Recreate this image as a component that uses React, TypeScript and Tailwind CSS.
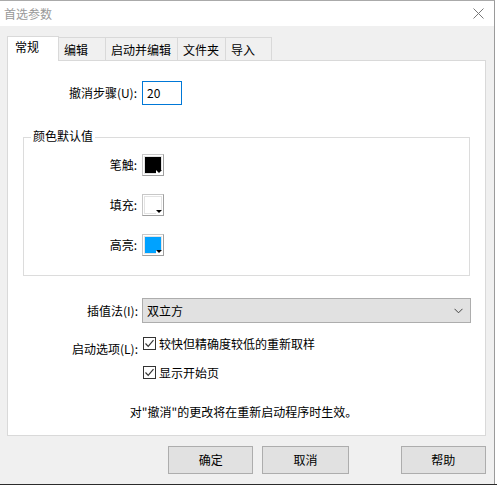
import React from 'react'

const font = { fontFamily: '"Noto Sans CJK SC", "Microsoft YaHei", sans-serif' }

function Swatch({ color }: { color: string }) {
  return (
    <div className="relative w-[22px] h-[22px] border border-[#a0a0a0] border-t-[#c8c8c8] border-l-[#c8c8c8] bg-white p-[1px]">
      <div className="w-full h-full border border-[#e3e3e3]" style={{ background: color }} />
      {/* little dropdown arrow */}
      <div className="absolute right-[1px] bottom-[1px] w-[6px] h-[4px] bg-white flex justify-center items-start">
        <div className="w-0 h-0 border-l-[3px] border-r-[3px] border-t-[3px] border-l-transparent border-r-transparent border-t-black" />
      </div>
    </div>
  )
}

function Check({ label }: { label: string }) {
  return (
    <div className="flex items-center">
      <div className="w-[13px] h-[13px] border border-[#333] bg-white flex items-center justify-center">
        <svg width="11" height="11" viewBox="0 0 11 11">
          <path d="M1.5 5.5 L4.2 8.3 L9.5 2.2" fill="none" stroke="#333" strokeWidth="1.2" />
        </svg>
      </div>
      <span className="ml-[3px] text-[12px] text-black leading-none">{label}</span>
    </div>
  )
}

export default function App() {
  const tabs = [
    { label: '编辑', w: 'w-[47px]' },
    { label: '启动并编辑', w: 'w-[72px]' },
    { label: '文件夹', w: 'w-[48px]' },
    { label: '导入', w: 'w-[46px]' },
  ]

  return (
    <div className="w-[497px] h-[485px] bg-white flex flex-col overflow-hidden" style={font}>
      <div className="flex flex-1">
        {/* Window */}
        <div className="w-[495px] h-[484px] flex flex-col bg-[#f0f0f0] border-t border-[#aaaaaa] border-r border-r-[#9a9a9a]">
          {/* Title bar */}
          <div className="h-[25px] bg-white flex items-center justify-between pl-[4px] pr-[10px]">
            <span className="text-[12px] text-[#999999] leading-none">首选参数</span>
            <svg width="11" height="11" viewBox="0 0 11 11">
              <path d="M0.5 0.5 L10.5 10.5 M10.5 0.5 L0.5 10.5" stroke="#777" strokeWidth="1" />
            </svg>
          </div>

          <div className="flex flex-col pl-[7px] pr-[8px] pt-[9px]">
            {/* Tabs */}
            <div className="flex items-end h-[25px]">
              <div className="w-[52px] h-[25px] bg-white border border-b-0 border-[#d9d9d9] pl-[7px] pt-[4px] text-[12px] text-black leading-none relative z-10 -mb-px">
                常规
              </div>
              {tabs.map((t) => (
                <div
                  key={t.label}
                  className={`${t.w} h-[23px] border border-l-0 border-b-0 border-[#d9d9d9] bg-[#f0f0f0] pl-[5px] pt-[6px] text-[12px] text-black leading-none`}
                >
                  {t.label}
                </div>
              ))}
            </div>

            {/* Panel */}
            <div className="h-[376px] bg-white border border-[#d9d9d9] flex flex-col">
              {/* Undo steps */}
              <div className="flex items-center mt-[20px]">
                <span className="w-[129px] text-right text-[12px] text-black">撤消步骤(U):</span>
                <div className="ml-[5px] w-[40px] h-[24px] border border-[#0078d7] flex items-center pl-[4px] text-[12px] text-black">
                  20
                </div>
              </div>

              {/* Colour group */}
              <div className="relative ml-[15px] mt-[32px] w-[447px] h-[139px] border border-[#dcdcdc] flex flex-col">
                <span className="absolute -top-[8px] left-[7px] bg-white px-[2px] text-[12px] text-black leading-none">
                  颜色默认值
                </span>
                {[
                  { label: '笔触:', color: '#000000' },
                  { label: '填充:', color: '#ffffff' },
                  { label: '高亮:', color: '#00a2ff' },
                ].map((r, i) => (
                  <div key={r.label} className={`flex items-center ${i === 0 ? 'mt-[16px]' : 'mt-[18px]'}`}>
                    <span className="w-[113px] text-right text-[12px] text-black">{r.label}</span>
                    <div className="ml-[5px]">
                      <Swatch color={r.color} />
                    </div>
                  </div>
                ))}
              </div>

              {/* Interpolation */}
              <div className="flex items-center mt-[22px]">
                <span className="w-[130px] text-right text-[12px] text-black">插值法(I):</span>
                <div className="ml-[4px] w-[329px] h-[25px] bg-[#e1e1e1] border border-[#adadad] flex items-center justify-between pl-[4px] pr-[7px] text-[12px] text-black">
                  <span>双立方</span>
                  <svg width="9" height="6" viewBox="0 0 9 6">
                    <path d="M0.5 0.8 L4.5 4.8 L8.5 0.8" fill="none" stroke="#444" strokeWidth="1" />
                  </svg>
                </div>
              </div>

              {/* Startup options */}
              <div className="flex items-start mt-[14px]">
                <span className="w-[130px] text-right text-[12px] text-black mt-[3px]">启动选项(L):</span>
                <div className="ml-[5px] flex flex-col gap-[16px]">
                  <Check label="较快但精确度较低的重新取样" />
                  <Check label="显示开始页" />
                </div>
              </div>

              <div className="mt-[24px] flex justify-center text-[12px] text-black pr-[6px]">
                对"撤消"的更改将在重新启动程序时生效。
              </div>
            </div>

            {/* Buttons */}
            <div className="flex mt-[10px] h-[28px]">
              <button className="ml-[161px] w-[86px] h-[28px] bg-[#e1e1e1] border border-[#adadad] text-[12px] text-black">
                确定
              </button>
              <button className="ml-[9px] w-[87px] h-[28px] bg-[#e1e1e1] border border-[#adadad] text-[12px] text-black">
                取消
              </button>
              <button className="ml-[52px] w-[86px] h-[28px] bg-[#e1e1e1] border border-[#adadad] text-[12px] text-black">
                帮助
              </button>
            </div>
          </div>
        </div>
      </div>
      <div className="h-[1px] bg-[#2b2b2b]" />
    </div>
  )
}
